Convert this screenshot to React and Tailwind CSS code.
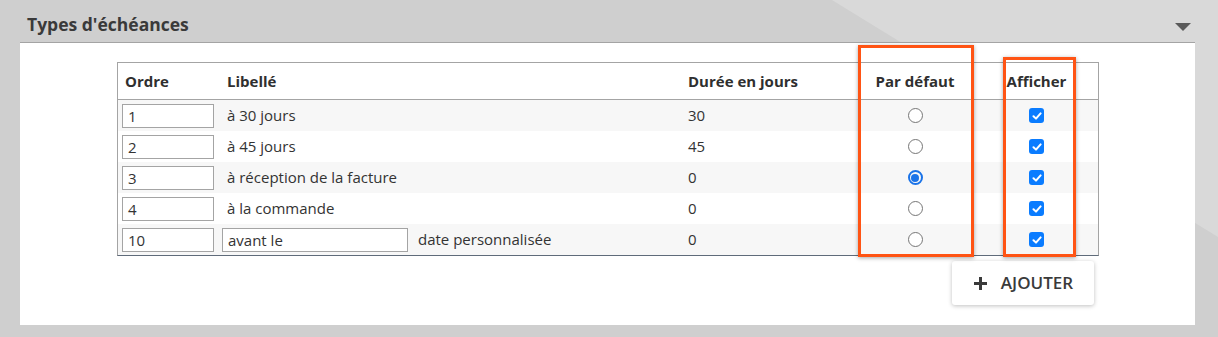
import React from "react";

const rows = [
  { ordre: "1", label: "à 30 jours", duree: "30", def: false },
  { ordre: "2", label: "à 45 jours", duree: "45", def: false },
  { ordre: "3", label: "à réception de la facture", duree: "0", def: true },
  { ordre: "4", label: "à la commande", duree: "0", def: false },
  { ordre: "10", custom: true, duree: "0", def: false },
];

function Radio({ checked }) {
  return checked ? (
    <span className="w-[15px] h-[15px] rounded-full border-2 border-[#1a73e8] flex items-center justify-center">
      <span className="w-[8px] h-[8px] rounded-full bg-[#1a73e8]" />
    </span>
  ) : (
    <span className="w-[15px] h-[15px] rounded-full border border-[#767676] bg-white" />
  );
}

function Check() {
  return (
    <span className="w-[15px] h-[15px] rounded-[3px] bg-[#0a7cff] flex items-center justify-center">
      <svg width="10" height="10" viewBox="0 0 10 10">
        <path d="M1.5 5.2 L4 7.6 L8.6 2.4" fill="none" stroke="white" strokeWidth="2" strokeLinecap="round" strokeLinejoin="round" />
      </svg>
    </span>
  );
}

export default function App() {
  const cols = "grid grid-cols-[104px_458px_175px_120px_123px]";

  return (
    <div className="relative w-[1218px] h-[337px] bg-[#cfcfcf] overflow-hidden text-[#333] [font-family:'Open_Sans',sans-serif]">
      {/* background shading */}
      <svg className="absolute inset-0" width="1218" height="337">
        <polygon points="832,0 1218,0 1218,237 " fill="#d9d9d9" />
      </svg>

      <div className="relative ml-[20px] w-[1175px]">
        <div className="h-[42px] flex items-center justify-between pl-[7px] pr-[4px]">
          <h2 className="text-[17.5px] font-bold text-[#3a3a3a] mt-[6px]">Types d'échéances</h2>
          <svg width="16" height="9" viewBox="0 0 16 9" className="mt-[12px]">
            <polygon points="0,0 16,0 8,8" fill="#5a5a5a" />
          </svg>
        </div>

        <div className="relative bg-white border-t border-[#a4a4a4] h-[283px] pl-[97px] pt-[19px]">
          <div className="w-[982px] border border-[#a4a4a4] border-b-[#5f6b7a] text-[15px]">
            <div className={`${cols} h-[37px] items-center border-b border-[#a4a4a4] font-bold text-[#2f2f2f]`}>
              <div className="pl-[7px]">Ordre</div>
              <div className="pl-[5px]">Libellé</div>
              <div className="pl-[8px]">Durée en jours</div>
              <div className="text-center">Par défaut</div>
              <div className="text-center">Afficher</div>
            </div>
            {rows.map((r, i) => (
              <div key={i} className={`${cols} h-[31px] items-center ${i % 2 === 0 ? "bg-[#f7f7f7]" : "bg-white"}`}>
                <div className="pl-[4px]">
                  <div className="w-[92px] h-[24px] border border-[#a4a4a4] bg-white pl-[5px] leading-[22px]">{r.ordre}</div>
                </div>
                {r.custom ? (
                  <div className="flex items-center">
                    <div className="w-[186px] h-[24px] border border-[#a4a4a4] bg-white pl-[5px] leading-[22px]">avant le</div>
                    <span className="ml-[10px]">date personnalisée</span>
                  </div>
                ) : (
                  <div className="pl-[5px]">{r.label}</div>
                )}
                <div className="pl-[8px]">{r.duree}</div>
                <div className="flex justify-center">
                  <Radio checked={r.def} />
                </div>
                <div className="flex justify-center">
                  <Check />
                </div>
              </div>
            ))}
          </div>

          <div className="flex justify-end w-[977px] mt-[5px]">
            <button className="w-[142px] h-[44px] bg-white rounded-[3px] shadow-[0_1px_4px_rgba(0,0,0,0.25)] flex items-center justify-center gap-[13px] text-[17px] font-semibold text-[#3a3a3a]">
              <svg width="15" height="15" viewBox="0 0 15 15">
                <path d="M7.5 1 V14 M1 7.5 H14" stroke="#3a3a3a" strokeWidth="3" />
              </svg>
              AJOUTER
            </button>
          </div>

          {/* highlight boxes */}
          <div className="absolute left-[838px] top-[2px] w-[116px] h-[212px] border-[3px] border-[#ff5414] shadow-[0_1px_4px_rgba(0,0,0,0.35)]" />
          <div className="absolute left-[983px] top-[14px] w-[73px] h-[200px] border-[3px] border-[#ff5414] shadow-[0_1px_4px_rgba(0,0,0,0.35)]" />
        </div>
      </div>
    </div>
  );
}
